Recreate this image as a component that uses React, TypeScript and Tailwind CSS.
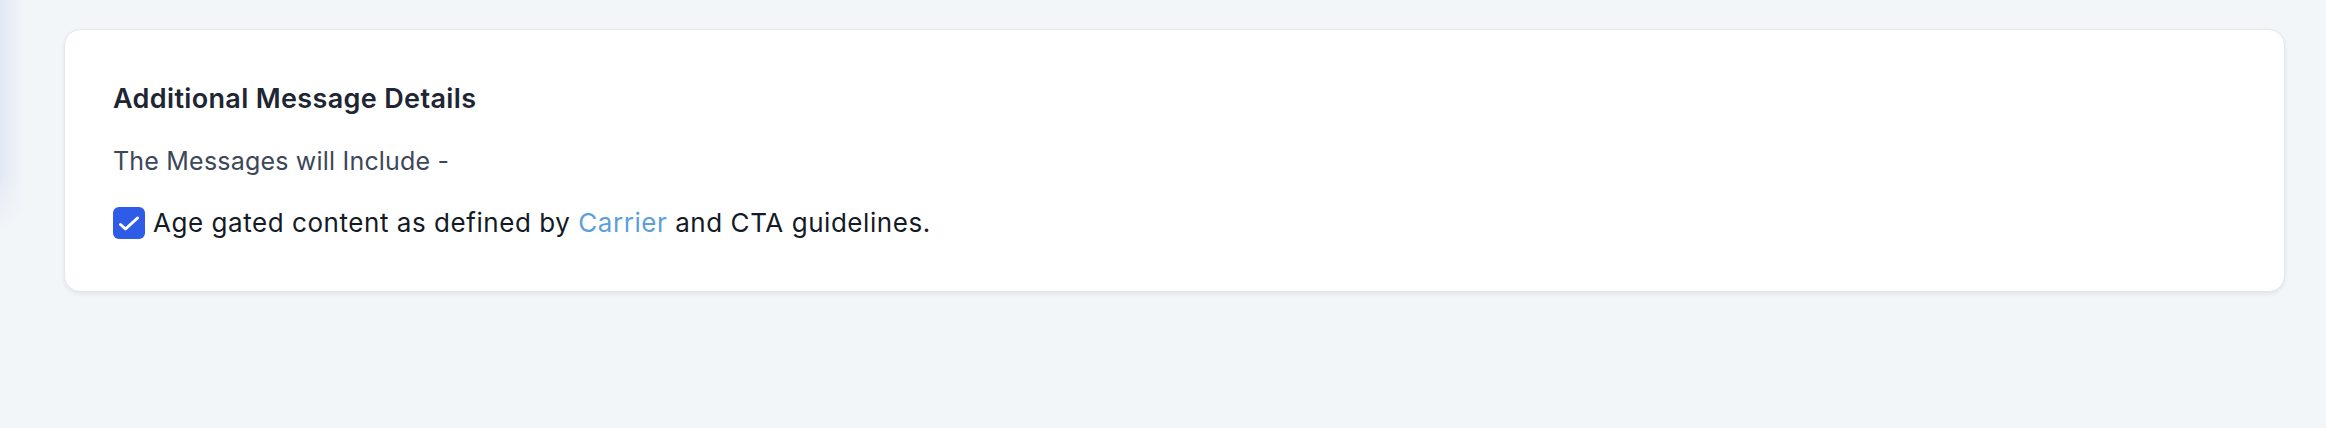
import React, { useState } from 'react';

// Message details card — single checkbox confirmation
export default function App() {
  const [ageGated, setAgeGated] = useState(true);

  return (
    <div
      className="relative min-h-screen w-full bg-[#f3f6f9] pl-[64px] pr-[41px] pt-[29px]"
      style={{ fontFamily: "Inter, 'Noto Sans', 'Liberation Sans', sans-serif" }}
    >
      {/* faint shadow cast by the panel to the left */}
      <div className="pointer-events-none absolute left-0 top-0 h-[232px] w-[24px] bg-[linear-gradient(to_right,rgba(205,215,238,0.45),rgba(243,246,249,0))] [mask-image:linear-gradient(to_bottom,black_75%,transparent)]" />

      <div className="relative rounded-2xl border border-[#e4e7ec] bg-white px-[48px] pt-[51px] pb-[50px] shadow-[0_2px_4px_rgba(16,24,40,0.08)]">
        <h2 className="text-[27px] leading-[36px] font-semibold text-[#1e2533] tracking-[0.35px]">
          Additional Message Details
        </h2>

        <p className="mt-[26px] text-[25px] leading-[36px] text-[#3d475a] tracking-[0.2px]">
          The Messages will Include -
        </p>

        <label className="mt-[26px] flex items-center gap-[8px] cursor-pointer">
          <button
            type="button"
            role="checkbox"
            aria-checked={ageGated}
            onClick={() => setAgeGated(!ageGated)}
            className="flex h-[32px] w-[32px] flex-shrink-0 items-center justify-center rounded-[6px] bg-[#2e5ce6]"
          >
            {ageGated && (
              <svg width="32" height="32" viewBox="0 0 32 32" fill="none" aria-hidden="true">
                <path d="M7.5 17.5l5 4.5L24.5 11" stroke="white" strokeWidth="3" strokeLinecap="round" strokeLinejoin="round" />
              </svg>
            )}
          </button>
          <span className="text-[26px] leading-[36px] text-[#141a26] tracking-[0.55px]">
            Age gated content as defined by{' '}
            <a className="text-[#5b9fd9]">Carrier</a> and CTA guidelines.
          </span>
        </label>
      </div>
    </div>
  );
}
